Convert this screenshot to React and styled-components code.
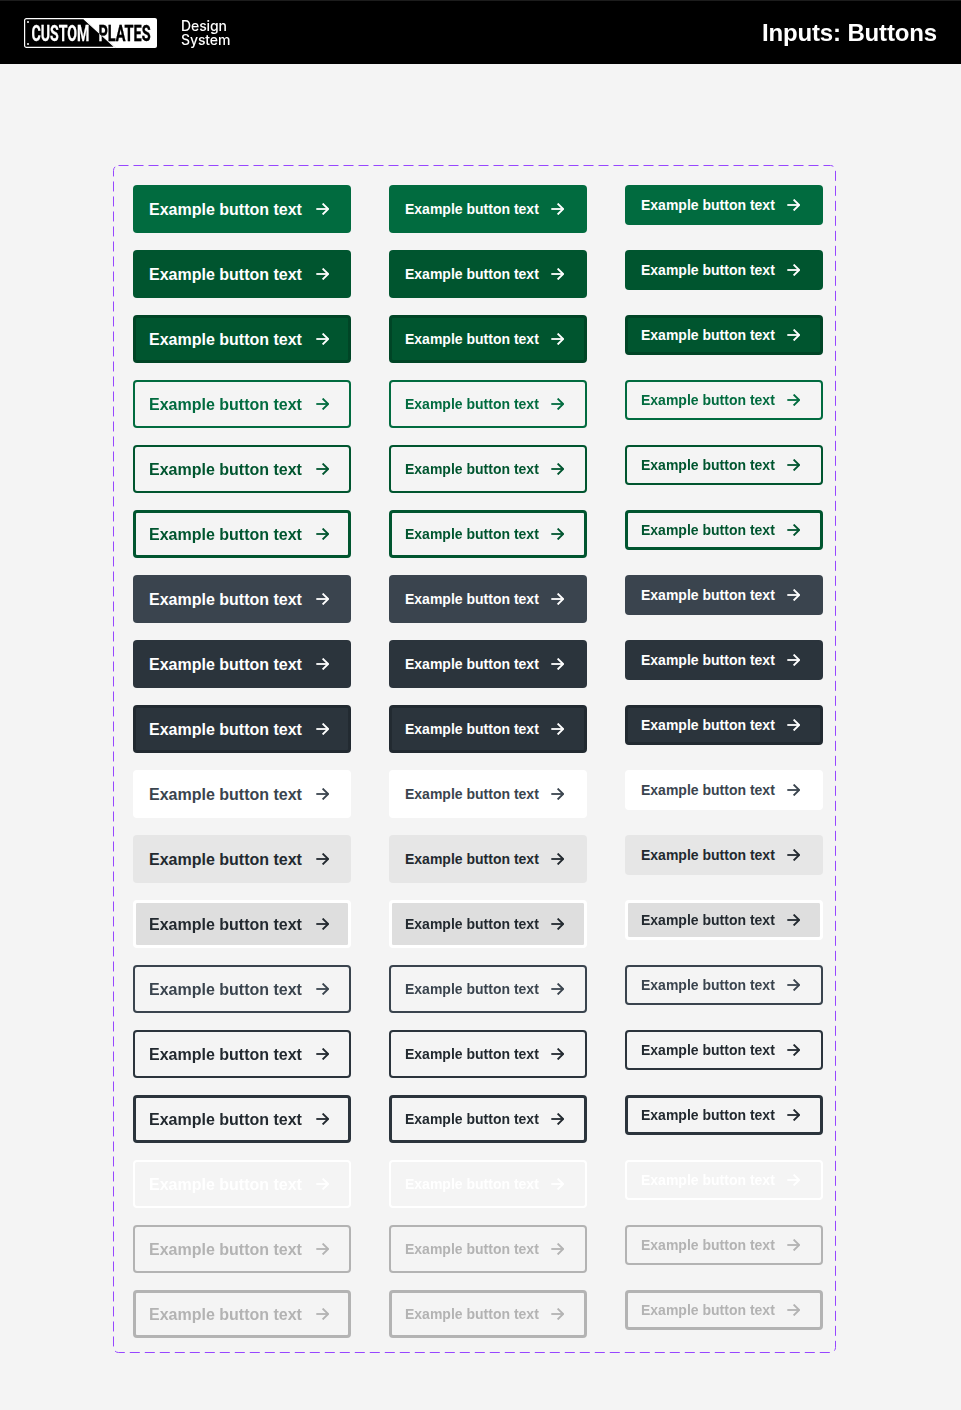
import React from "react";
import styled, { createGlobalStyle } from "styled-components";

const Global = createGlobalStyle`
  html, body { margin: 0; padding: 0; background: #f4f4f4; }
  body { font-family: "Liberation Sans", Arial, sans-serif; }
`;

const Page = styled.div`
  width: 961px;
  height: 1410px;
  background: #f4f4f4;
  overflow: hidden;
`;

const Header = styled.header`
  height: 64px;
  background: #000;
  border-top: 1px solid #1c1c1c;
  display: flex;
  align-items: center;
  padding: 0 24px;
  box-sizing: border-box;
`;

const LogoMark = styled.svg`
  display: block;
  width: 133px;
  height: 30px;
  flex: none;
`;

const LogoWord = styled.text`
  fill: #fff;
  stroke: #fff;
  stroke-width: 0.25px;
  font-family: Roboto, sans-serif;
  font-size: 22.5px;
  font-weight: 700;
  mix-blend-mode: difference;
`;

const Product = styled.div`
  margin-left: 24px;
  color: #fff;
  font-family: Inter, "Liberation Sans", sans-serif;
  font-size: 14px;
  line-height: 14px;
  font-weight: 500;
  letter-spacing: -0.1px;
`;

const Title = styled.h1`
  margin: 0 0 0 auto;
  color: #fff;
  font-size: 24px;
  line-height: 32px;
  font-weight: 700;
  letter-spacing: -0.15px;
`;

const Frame = styled.main`
  position: relative;
  box-sizing: border-box;
  width: 723px;
  height: 1188px;
  margin: 101px 0 0 113px;
  padding: 20px;
`;

const FrameDash = styled.svg`
  position: absolute;
  inset: 0;
  width: 723px;
  height: 1188px;
  pointer-events: none;
`;

const Grid = styled.div`
  display: grid;
  grid-template-columns: 218px 198px 198px;
  column-gap: 38px;
  grid-auto-rows: 48px;
  row-gap: 17px;
  align-items: start;
`;

const sizes = {
  lg: { h: 48, fs: 16, lead: 22, gap: 14 },
  md: { h: 48, fs: 14, lead: 20, gap: 12.5 },
  sm: { h: 40, fs: 14, lead: 20, gap: 12.5 },
};

const Button = styled.button`
  box-sizing: border-box;
  display: flex;
  align-items: center;
  width: 100%;
  height: ${(p) => sizes[p.$size].h}px;
  padding: 0 0 0 ${(p) => 16 - p.$bw}px;
  margin: 0;
  border: ${(p) => p.$bw}px solid ${(p) => p.$border || "transparent"};
  border-radius: 4px;
  background: ${(p) => p.$bg || "transparent"};
  color: ${(p) => p.$fg};
  font-family: inherit;
  font-size: ${(p) => sizes[p.$size].fs}px;
  font-weight: 700;
  white-space: nowrap;
  background-clip: ${(p) => (p.$clip ? "padding-box" : "border-box")};
`;

const Label = styled.span`
  display: block;
  line-height: ${(p) => sizes[p.$size].lead}px;
  padding-top: ${(p) => (p.$size === "lg" ? 1 : 0)}px;
`;

const Arrow = styled.svg`
  flex: none;
  display: block;
  width: 13px;
  height: 12px;
  margin-left: ${(p) => sizes[p.$size].gap}px;
`;

const variants = [
  { bg: "#016b3f", fg: "#fff", bw: 0 },
  { bg: "#00552f", fg: "#fff", bw: 0 },
  { bg: "#00552f", fg: "#fff", bw: 3, border: "#004526" },
  { fg: "#016b3f", bw: 2, border: "#016b3f" },
  { fg: "#00552f", bw: 2, border: "#00552f" },
  { fg: "#00552f", bw: 3, border: "#00552f" },
  { bg: "#3a444e", fg: "#fff", bw: 0 },
  { bg: "#2b343c", fg: "#fff", bw: 0 },
  { bg: "#2b343c", fg: "#fff", bw: 3, border: "#222a31" },
  { bg: "#fff", fg: "#3a444e", bw: 0 },
  { bg: "#e6e6e6", fg: "#22292f", bw: 0 },
  { bg: "#dedede", fg: "#22292f", bw: 3, border: "#fff", clip: true },
  { fg: "#3a444e", bw: 2, border: "#3a444e" },
  { fg: "#22292f", bw: 2, border: "#2b343c" },
  { fg: "#22292f", bw: 3, border: "#2b343c" },
  { fg: "#fff", bw: 2, border: "#fff" },
  { fg: "#b3b3b3", bw: 2, border: "#b3b3b3" },
  { fg: "#b3b3b3", bw: 3, border: "#b3b3b3" },
];

const columns = ["lg", "md", "sm"];

function ArrowIcon({ size }) {
  return (
    <Arrow $size={size} viewBox="0 0 13 12" fill="none" stroke="currentColor" strokeWidth="1.8">
      <path d="M0.3 6H12.2" />
      <path d="M6.6 0.5L12.2 6L6.6 11.5" />
    </Arrow>
  );
}

function Logo() {
  return (
    <LogoMark viewBox="0 0 133 30">
      <path d="M2.5 0.6H59.5L91 29.4H2.5C1.4 29.4 0.6 28.6 0.6 27.5V2.5C0.6 1.4 1.4 0.6 2.5 0.6Z" fill="#000" stroke="#fff" strokeWidth="1.2" />
      <path d="M59 0H131C132.1 0 133 0.9 133 2V28C133 29.1 132.1 30 131 30H92Z" fill="#fff" />
      <circle cx="4" cy="4" r="1" fill="#fff" />
      <circle cx="4" cy="26" r="1" fill="#fff" />
      <LogoWord transform="translate(7.5 23.3) scale(0.62 1)" textLength="93.5" lengthAdjust="spacingAndGlyphs">CUSTOM</LogoWord>
      <LogoWord transform="translate(74.5 23.3) scale(0.62 1)" textLength="83.9" lengthAdjust="spacingAndGlyphs">PLATES</LogoWord>
    </LogoMark>
  );
}

export default function App() {
  return (
    <Page>
      <Global />
      <Header>
        <Logo />
        <Product>
          Design
          <br />
          System
        </Product>
        <Title>Inputs: Buttons</Title>
      </Header>
      <Frame>
        <FrameDash viewBox="0 0 723 1188" fill="none">
          <rect x="0.5" y="0.5" width="722" height="1187" rx="5" stroke="#9747ff" strokeDasharray="10 5" />
        </FrameDash>
        <Grid>
          {variants.flatMap((v, i) =>
            columns.map((size) => (
              <Button key={`${i}-${size}`} $size={size} $bg={v.bg} $fg={v.fg} $bw={v.bw} $border={v.border} $clip={v.clip}>
                <Label $size={size}>Example button text</Label>
                <ArrowIcon size={size} />
              </Button>
            ))
          )}
        </Grid>
      </Frame>
    </Page>
  );
}
